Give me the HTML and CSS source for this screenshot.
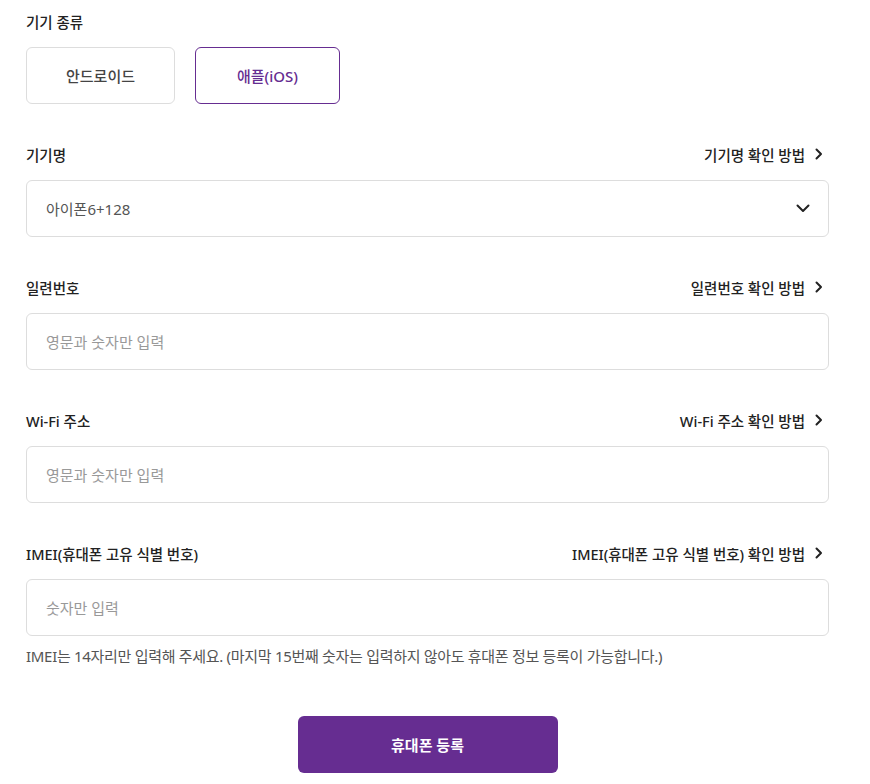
FILE: index.html
```html
<!DOCTYPE html>
<html lang="ko">
<head>
<meta charset="utf-8">
<link rel="stylesheet" href="styles.css">
</head>
<body>
<form class="form">
  <div class="field">
    <div class="label-row"><span class="label">기기 종류</span></div>
    <div class="type-row">
      <button type="button" class="type-btn type-android">안드로이드</button>
      <button type="button" class="type-btn type-ios selected">애플(iOS)</button>
    </div>
  </div>

  <div class="field">
    <div class="label-row">
      <span class="label">기기명</span>
      <a class="help-link">기기명 확인 방법
        <svg class="chev-right" width="8" height="12" viewBox="0 0 8 12"><path d="M1.5 1.5 L6 6 L1.5 10.5" fill="none" stroke="#222" stroke-width="2" stroke-linecap="round" stroke-linejoin="round"/></svg>
      </a>
    </div>
    <div class="box select-box">
      <span class="value">아이폰6+128</span>
      <svg class="chev-down" width="14" height="9" viewBox="0 0 14 9"><path d="M1.5 1.5 L7 7 L12.5 1.5" fill="none" stroke="#222" stroke-width="2" stroke-linecap="round" stroke-linejoin="round"/></svg>
    </div>
  </div>

  <div class="field">
    <div class="label-row">
      <span class="label">일련번호</span>
      <a class="help-link">일련번호 확인 방법
        <svg class="chev-right" width="8" height="12" viewBox="0 0 8 12"><path d="M1.5 1.5 L6 6 L1.5 10.5" fill="none" stroke="#222" stroke-width="2" stroke-linecap="round" stroke-linejoin="round"/></svg>
      </a>
    </div>
    <div class="box"><span class="placeholder">영문과 숫자만 입력</span></div>
  </div>

  <div class="field">
    <div class="label-row">
      <span class="label">Wi-Fi 주소</span>
      <a class="help-link">Wi-Fi 주소 확인 방법
        <svg class="chev-right" width="8" height="12" viewBox="0 0 8 12"><path d="M1.5 1.5 L6 6 L1.5 10.5" fill="none" stroke="#222" stroke-width="2" stroke-linecap="round" stroke-linejoin="round"/></svg>
      </a>
    </div>
    <div class="box"><span class="placeholder">영문과 숫자만 입력</span></div>
  </div>

  <div class="field field-last">
    <div class="label-row">
      <span class="label">IMEI(휴대폰 고유 식별 번호)</span>
      <a class="help-link">IMEI(휴대폰 고유 식별 번호) 확인 방법
        <svg class="chev-right" width="8" height="12" viewBox="0 0 8 12"><path d="M1.5 1.5 L6 6 L1.5 10.5" fill="none" stroke="#222" stroke-width="2" stroke-linecap="round" stroke-linejoin="round"/></svg>
      </a>
    </div>
    <div class="box"><span class="placeholder">숫자만 입력</span></div>
    <p class="hint">IMEI는 14자리만 입력해 주세요. (마지막 15번째 숫자는 입력하지 않아도 휴대폰 정보 등록이 가능합니다.)</p>
  </div>

  <div class="submit-row">
    <button type="button" class="submit">휴대폰 등록</button>
  </div>
</form>
</body>
</html>
```

FILE: styles.css
```css
* { box-sizing: border-box; }
body {
  margin: 0;
  background: #fff;
  font-family: "Noto Sans", "Noto Sans CJK KR", sans-serif;
  color: #222;
}
.form {
  width: 803px;
  margin-left: 26px;
  padding-top: 10px;
}
.field { margin-bottom: 39px; }
.field-last { margin-bottom: 0; }
.label-row {
  display: flex;
  justify-content: space-between;
  align-items: center;
  height: 22px;
  margin-bottom: 15px;
}
.label {
  font-size: 14.5px;
  font-weight: 500;
  color: #222;
}
.help-link {
  display: flex;
  align-items: center;
  gap: 10px;
  font-size: 14.5px;
  font-weight: 500;
  color: #222;
}
.chev-right { display: block; margin-right: 6px; }
.type-row {
  display: flex;
  gap: 20px;
}
.type-btn {
  height: 57px;
  border: 1px solid #ddd;
  border-radius: 6px;
  background: #fff;
  font-family: inherit;
  font-size: 15px;
  font-weight: 500;
  color: #444;
}
.type-android { width: 149px; }
.type-ios { width: 145px; }
.type-btn.selected {
  border-color: #662d91;
  color: #662d91;
}
.box {
  height: 57px;
  border: 1px solid #ddd;
  border-radius: 6px;
  display: flex;
  align-items: center;
  padding: 0 19px;
  font-size: 15px;
}
.select-box { justify-content: space-between; padding-right: 18px; }
.value { color: #555; }
.placeholder { color: #999; }
.chev-down { display: block; }
.hint {
  margin: 10px 0 0;
  font-size: 15px;
  line-height: 20px;
  letter-spacing: -0.3px;
  color: #555;
}
.submit-row {
  display: flex;
  justify-content: center;
  margin-top: 50px;
}
.submit {
  width: 260px;
  height: 57px;
  border: 0;
  border-radius: 6px;
  background: #662d91;
  color: #fff;
  font-family: inherit;
  font-size: 15px;
  font-weight: 700;
}
```
